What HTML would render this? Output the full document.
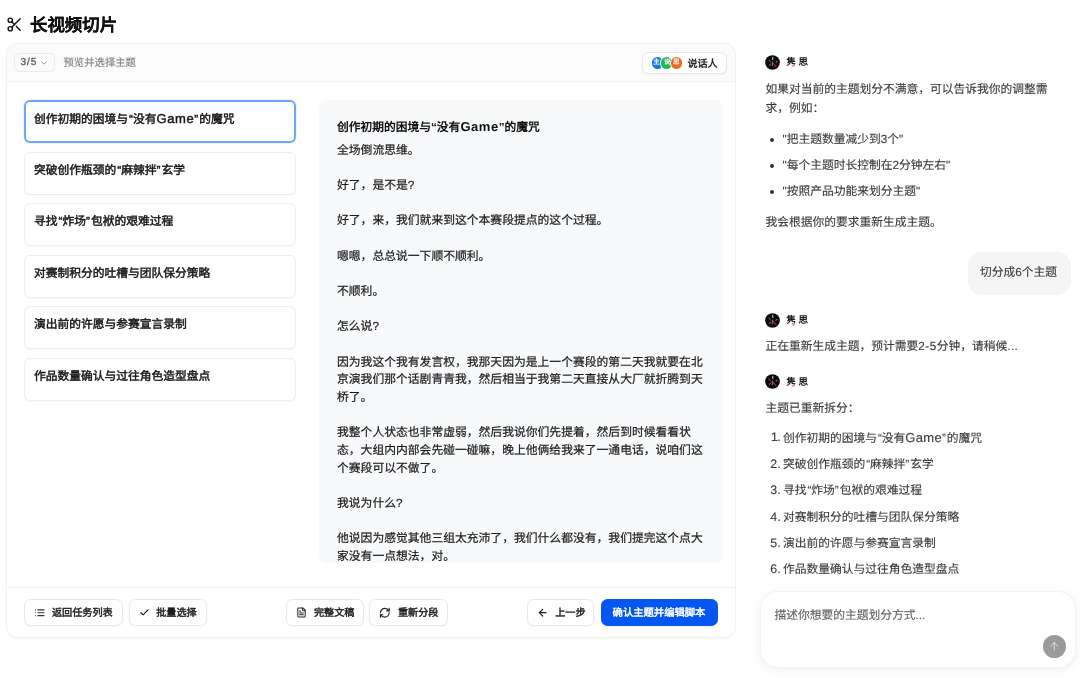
<!DOCTYPE html>
<html lang="zh-CN">
<head>
<meta charset="utf-8">
<title>长视频切片</title>
<style>
*{box-sizing:border-box;margin:0;padding:0}
html,body{width:1080px;height:678px;overflow:hidden;background:#fff}
body{font-family:"Liberation Sans",sans-serif;color:#111;position:relative;text-rendering:geometricPrecision;will-change:transform}
.abs{position:absolute}
.title{left:30px;top:13.5px;font-size:17.45px;font-weight:700;-webkit-text-stroke:.15px #111;line-height:23px;color:#111;white-space:nowrap}
.card{left:6px;top:43px;width:730px;height:595px;border:1px solid #f0f0f2;border-radius:11px;background:#fff;box-shadow:0 1px 2px rgba(0,0,0,.03)}
.chead{left:7px;top:44px;width:728px;height:38px;background:#fbfbfc;border-bottom:1.5px solid #f0f0f2;border-radius:10px 10px 0 0}
.pill{left:14px;top:53px;width:40.5px;height:19px;border:1px solid #eaebee;border-radius:5.5px;background:#fbfbfc;font-size:10.1px;font-weight:400;-webkit-text-stroke:.4px #666;color:#666;letter-spacing:.9px;line-height:18.2px;padding-left:5.6px}
.sub{left:63.5px;top:56.6px;font-size:10.35px;color:#848488;-webkit-text-stroke:.15px #848488;line-height:14px;white-space:nowrap}
.spk{left:642px;top:52px;width:85.4px;height:22px;border:1px solid #e6e7ea;border-radius:6px;background:#fff;box-shadow:0 1px 2px rgba(0,0,0,.04)}
.spk span{position:absolute;left:44.4px;top:4.6px;font-size:10.1px;font-weight:700;line-height:14px;color:#222;white-space:nowrap}
.item{left:24px;width:272px;height:43px;border:1px solid #ededf0;border-radius:6px;background:#fff;font-size:11.76px;font-weight:400;-webkit-text-stroke:0.45px #161616;color:#161616;line-height:16px;padding:10px 0 0 9px;white-space:nowrap;box-shadow:0 1px 2px rgba(0,0,0,.03)}
.item.sel{padding:9px 0 0 8px;border:2px solid #6fa7f0;box-shadow:0 0 0 1px rgba(102,161,239,.12)}
.panel{left:319px;top:100px;width:404px;height:463px;background:#f8f9fb;border-radius:7px;overflow:hidden}
.ptitle{left:337px;top:119.2px;font-size:11.76px;font-weight:700;line-height:16px;color:#111;white-space:nowrap}
.ptext{left:337px;top:141.65px;width:370px;font-size:11.8px;line-height:17.67px;color:#1a1a1a;-webkit-text-stroke:.2px #1a1a1a;white-space:pre-wrap}
.foot{left:7px;top:587px;width:728px;height:1px;background:#eeeef0}
.btn{top:599px;height:27px;border:1px solid #e6e7ea;border-radius:6.5px;background:#fff;font-size:10.15px;font-weight:400;-webkit-text-stroke:.45px #1c1c1c;color:#1c1c1c;line-height:25px;white-space:nowrap;box-shadow:0 1px 2px rgba(0,0,0,.04)}
.btn span{position:absolute;top:.9px}
.btn svg{position:absolute}
.primary{background:#0456f0;border-color:#0456f0;color:#fff;-webkit-text-stroke:.45px #fff}
.chat{font-size:11.75px;line-height:19.9px;color:#3a3a3a;-webkit-text-stroke:.12px #3a3a3a;white-space:nowrap}
.av{width:15px;height:15px}
.nm{font-size:9.6px;font-weight:700;line-height:12px;color:#222;letter-spacing:2.6px;white-space:nowrap}
.nm i{position:absolute;left:5.8px;top:7.3px;width:3px;height:3px;border-radius:50%;background:#f0a0aa}
.bubble{left:968px;top:252px;width:102.5px;height:42.5px;border-radius:14px;background:#f5f5f5}
.input{left:760px;top:591px;width:316px;height:76.5px;border-radius:18px;background:#fff;border:1px solid #f3f3f3;box-shadow:0 2px 8px rgba(0,0,0,.065)}
.send{left:1042.5px;top:634.5px;width:23.5px;height:23.5px;border-radius:50%;background:#9a9a9a}
.qo{margin-left:1.1px}.qc{margin-right:1.1px}
.en{font-size:13px;letter-spacing:.6px}
.num{left:762px;width:18.6px;text-align:right;font-size:12.4px}
.qo2{margin-left:.95px}.qc2{margin-right:.95px}
.en2{font-size:13px;letter-spacing:.3px}
</style>
</head>
<body>
<!-- header -->
<svg class="abs" style="left:6.1px;top:16.3px" width="17" height="17" viewBox="0 0 24 24" fill="none" stroke="#111" stroke-width="2" stroke-linecap="round" stroke-linejoin="round"><circle cx="6" cy="6" r="3"/><circle cx="6" cy="18" r="3"/><path d="M20 4 8.12 15.88"/><path d="M14.47 14.48 20 20"/><path d="M8.12 8.12 12 12"/></svg>
<div class="abs title">长视频切片</div>

<div class="abs card"></div>
<div class="abs chead"></div>
<div class="abs pill">3/5</div>
<div class="abs sub">预览并选择主题</div>
<div class="abs spk"><span>说话人</span></div>

<!-- list -->
<div class="abs item sel" style="top:100px">创作初期的困境与<span class="qo">“</span>没有<span class="en">Game</span><span class="qc">”</span>的魔咒</div>
<div class="abs item" style="top:151.5px">突破创作瓶颈的<span class="qo">“</span>麻辣拌<span class="qc">”</span>玄学</div>
<div class="abs item" style="top:203px">寻找<span class="qo">“</span>炸场<span class="qc">”</span>包袱的艰难过程</div>
<div class="abs item" style="top:254.5px">对赛制积分的吐槽与团队保分策略</div>
<div class="abs item" style="top:306px">演出前的许愿与参赛宣言录制</div>
<div class="abs item" style="top:357.5px">作品数量确认与过往角色造型盘点</div>

<!-- panel -->
<div class="abs panel"></div>
<div class="abs ptitle">创作初期的困境与“没有<span style="font-size:13px;letter-spacing:.55px">Game</span>”的魔咒</div>
<div class="abs ptext">全场倒流思维。

好了，是不是?

好了，来，我们就来到这个本赛段提点的这个过程。

嗯嗯，总总说一下顺不顺利。

不顺利。

怎么说?

因为我这个我有发言权，我那天因为是上一个赛段的第二天我就要在北京演我们那个话剧青青我，然后相当于我第二天直接从大厂就折腾到天桥了。

我整个人状态也非常虚弱，然后我说你们先提着，然后到时候看看状态，大组内内部会先碰一碰嘛，晚上他俩给我来了一通电话，说咱们这个赛段可以不做了。

我说为什么?

他说因为感觉其他三组太充沛了，我们什么都没有，我们提完这个点大家没有一点想法，对。</div>

<div class="abs foot"></div>
<!-- pill chevron -->
<svg class="abs" style="left:40px;top:59px" width="8" height="8" viewBox="0 0 24 24" fill="none" stroke="#888" stroke-width="2.6" stroke-linecap="round" stroke-linejoin="round"><path d="m5 8.5 7 7 7-7"/></svg>

<!-- speaker avatars -->
<div class="abs" style="left:651.9px;top:57px;width:11.5px;height:11.5px;border-radius:50%;background:#1677e8"></div>
<div class="abs" style="left:660.9px;top:57px;width:11.5px;height:11.5px;border-radius:50%;background:#1fb85a;box-shadow:0 0 0 1px #fff"></div>
<div class="abs" style="left:670.5px;top:57px;width:11.5px;height:11.5px;border-radius:50%;background:#f2681f;box-shadow:0 0 0 1px #fff"></div>
<div class="abs" style="left:653.3px;top:58.8px;font-size:6.6px;line-height:8px;font-weight:700;color:#fff">主</div>
<div class="abs" style="left:664.1px;top:58.8px;font-size:6.6px;line-height:8px;font-weight:700;color:#fff">说</div>
<div class="abs" style="left:673px;top:58.8px;font-size:6.6px;line-height:8px;font-weight:700;color:#fff">思</div>

<!-- footer buttons -->
<div class="abs btn" style="left:24px;width:99px"><svg style="left:9.3px;top:7.3px" width="11.5" height="11.5" viewBox="0 0 24 24" fill="none" stroke="#333" stroke-width="2.1" stroke-linecap="round"><path d="M8 6h13M8 12h13M8 18h13M3 6h.01M3 12h.01M3 18h.01"/></svg><span style="left:27px">返回任务列表</span></div>
<div class="abs btn" style="left:129px;width:78px"><svg style="left:9.2px;top:6.6px" width="11" height="11" viewBox="0 0 24 24" fill="none" stroke="#222" stroke-width="2.4" stroke-linecap="round" stroke-linejoin="round"><path d="M20 6 9 17l-5-5"/></svg><span style="left:26.2px">批量选择</span></div>
<div class="abs btn" style="left:286px;width:77.6px"><svg style="left:9px;top:6.8px" width="11" height="11" viewBox="0 0 24 24" fill="none" stroke="#222" stroke-width="2.2" stroke-linecap="round" stroke-linejoin="round"><path d="M15 2H6a2 2 0 0 0-2 2v16a2 2 0 0 0 2 2h12a2 2 0 0 0 2-2V7Z"/><path d="M14 2v4a2 2 0 0 0 2 2h4"/><path d="M10 9H8M16 13H8M16 17H8"/></svg><span style="left:27px">完整文稿</span></div>
<div class="abs btn" style="left:369.3px;width:78.4px"><svg style="left:8.8px;top:6.8px" width="11.6" height="11.6" viewBox="0 0 24 24" fill="none" stroke="#222" stroke-width="2.4" stroke-linecap="round" stroke-linejoin="round"><path d="M3 12a9 9 0 0 1 9-9 9.75 9.75 0 0 1 6.74 2.74L21 8"/><path d="M21 3v5h-5"/><path d="M21 12a9 9 0 0 1-9 9 9.75 9.75 0 0 1-6.74-2.74L3 16"/><path d="M8 16H3v5"/></svg><span style="left:27.7px">重新分段</span></div>
<div class="abs btn" style="left:527.3px;width:67.2px"><svg style="left:8.6px;top:7.1px" width="11.4" height="11.4" viewBox="0 0 24 24" fill="none" stroke="#222" stroke-width="2.5" stroke-linecap="round" stroke-linejoin="round"><path d="m12 19-7-7 7-7"/><path d="M19 12H5"/></svg><span style="left:26.9px">上一步</span></div>
<div class="abs btn primary" style="left:601px;width:117px;font-size:10.32px"><span style="left:10.6px">确认主题并编辑脚本</span></div>

<!-- chat -->
<svg class="abs av" style="left:765.3px;top:54.5px" viewBox="-7.5 -7.5 15 15"><circle r="7.35" fill="#0a0a0a"/><g stroke-linecap="round" fill="none"><path d="M.25-5.2v2.3" stroke="#d8d8d8" stroke-width="1"/><path d="M-3.6-2.3l1.3 1.2" stroke="#9a9a9a" stroke-width=".9"/><path d="M-3.3 2.9l1.4-1.2" stroke="#8aa08a" stroke-width=".9"/><path d="M3.6-.5l.9-.4" stroke="#cfcfcf" stroke-width=".8"/><path d="M-.1-.4v3.6" stroke="#d8506a" stroke-width="1.05"/><path d="M0 .2l3.6 4" stroke="#d8506a" stroke-width=".95"/></g></svg>
<div class="abs nm" style="left:786.2px;top:57.1px">隽思<i></i></div>
<div class="abs chat" style="left:765.5px;top:79.5px">如果对当前的主题划分不满意，可以告诉我你的调整需<br>求，例如：</div>
<div class="abs chat" style="left:782.5px;top:129.6px">"把主题数量减少到3个"</div>
<div class="abs chat" style="left:782.5px;top:155.6px">"每个主题时长控制在2分钟左右"</div>
<div class="abs chat" style="left:782.5px;top:181.8px">"按照产品功能来划分主题"</div>
<div class="abs" style="left:769.5px;top:137.7px;width:4px;height:4px;border-radius:50%;background:#333"></div>
<div class="abs" style="left:769.5px;top:163.7px;width:4px;height:4px;border-radius:50%;background:#333"></div>
<div class="abs" style="left:769.5px;top:189.9px;width:4px;height:4px;border-radius:50%;background:#333"></div>
<div class="abs chat" style="left:765.5px;top:213.3px">我会根据你的要求重新生成主题。</div>

<div class="abs bubble"></div>
<div class="abs chat" style="left:980px;top:263.2px">切分成6个主题</div>

<svg class="abs av" style="left:765.3px;top:312.7px" viewBox="-7.5 -7.5 15 15"><circle r="7.35" fill="#0a0a0a"/><g stroke-linecap="round" fill="none"><path d="M.25-5.2v2.3" stroke="#d8d8d8" stroke-width="1"/><path d="M-3.6-2.3l1.3 1.2" stroke="#9a9a9a" stroke-width=".9"/><path d="M-3.3 2.9l1.4-1.2" stroke="#8aa08a" stroke-width=".9"/><path d="M3.6-.5l.9-.4" stroke="#cfcfcf" stroke-width=".8"/><path d="M-.1-.4v3.6" stroke="#d8506a" stroke-width="1.05"/><path d="M0 .2l3.6 4" stroke="#d8506a" stroke-width=".95"/></g></svg>
<div class="abs nm" style="left:786.2px;top:315.3px">隽思<i></i></div>
<div class="abs chat" style="left:765.5px;top:337.2px">正在重新生成主题，预计需要<span style="letter-spacing:.5px">2-5</span>分钟，请稍候<span style="letter-spacing:.4px">...</span></div>

<svg class="abs av" style="left:765.3px;top:374.1px" viewBox="-7.5 -7.5 15 15"><circle r="7.35" fill="#0a0a0a"/><g stroke-linecap="round" fill="none"><path d="M.25-5.2v2.3" stroke="#d8d8d8" stroke-width="1"/><path d="M-3.6-2.3l1.3 1.2" stroke="#9a9a9a" stroke-width=".9"/><path d="M-3.3 2.9l1.4-1.2" stroke="#8aa08a" stroke-width=".9"/><path d="M3.6-.5l.9-.4" stroke="#cfcfcf" stroke-width=".8"/><path d="M-.1-.4v3.6" stroke="#d8506a" stroke-width="1.05"/><path d="M0 .2l3.6 4" stroke="#d8506a" stroke-width=".95"/></g></svg>
<div class="abs nm" style="left:786.2px;top:376.7px">隽思<i></i></div>
<div class="abs chat" style="left:765.5px;top:398.6px">主题已重新拆分：</div>
<div class="abs chat num" style="top:428.2px"><span style="letter-spacing:-.8px">1</span>.</div><div class="abs chat" style="left:783px;top:428.2px">创作初期的困境与<span class="qo2">“</span>没有<span class="en2">Game</span><span class="qc2">”</span>的魔咒</div>
<div class="abs chat num" style="top:454.6px">2.</div><div class="abs chat" style="left:783px;top:454.6px">突破创作瓶颈的<span class="qo2">“</span>麻辣拌<span class="qc2">”</span>玄学</div>
<div class="abs chat num" style="top:481.0px">3.</div><div class="abs chat" style="left:783px;top:481.0px">寻找<span class="qo2">“</span>炸场<span class="qc2">”</span>包袱的艰难过程</div>
<div class="abs chat num" style="top:507.5px">4.</div><div class="abs chat" style="left:783px;top:507.5px">对赛制积分的吐槽与团队保分策略</div>
<div class="abs chat num" style="top:534.3px">5.</div><div class="abs chat" style="left:783px;top:534.3px">演出前的许愿与参赛宣言录制</div>
<div class="abs chat num" style="top:560.4px">6.</div><div class="abs chat" style="left:783px;top:560.4px">作品数量确认与过往角色造型盘点</div>

<div class="abs input"></div>
<div class="abs chat" style="left:774.5px;top:606.4px;color:#6b6b6b">描述你想要的主题划分方式...</div>
<div class="abs send"></div>
<svg class="abs" style="left:1048px;top:640px" width="12.5" height="12.5" viewBox="0 0 24 24" fill="none" stroke="#e2e2e2" stroke-width="1.9" stroke-linecap="round" stroke-linejoin="round"><path d="m5 12 7-7 7 7"/><path d="M12 19V5"/></svg>

</body>
</html>
